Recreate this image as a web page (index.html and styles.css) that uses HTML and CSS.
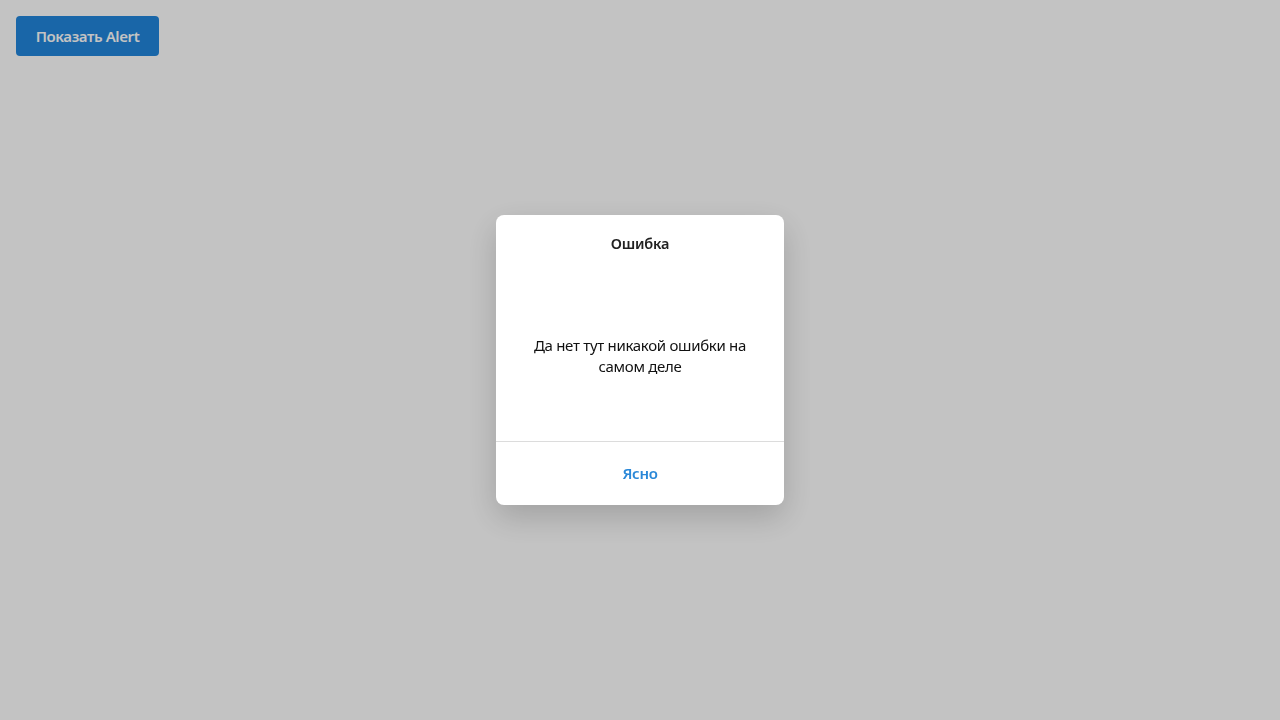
FILE: index.html
```html
<!DOCTYPE html>
<html lang="ru">
<head>
<meta charset="utf-8">
<link rel="stylesheet" href="styles.css">
</head>
<body>
<div class="page">
  <button class="show-btn">Показать Alert</button>
</div>
<div class="overlay">
  <div class="alert">
    <div class="alert-title">Ошибка</div>
    <div class="alert-body">
      <p class="alert-message">Да нет тут никакой ошибки на самом деле</p>
    </div>
    <div class="alert-footer">
      <button class="alert-btn">Ясно</button>
    </div>
  </div>
</div>
</body>
</html>
```
FILE: styles.css
```css
html, body {
  margin: 0;
  padding: 0;
  height: 100%;
}
body {
  font-family: "Noto Sans", "Open Sans", sans-serif;
  background: #ffffff;
}
.page {
  padding: 16px;
}
.show-btn {
  font-family: inherit;
  font-size: 15px;
  font-weight: 600;
  color: #ffffff;
  background: #2186dc;
  border: none;
  border-radius: 4px;
  height: 40px;
  width: 143px;
  padding: 0;
  letter-spacing: -0.4px;
}
.overlay {
  position: fixed;
  inset: 0;
  background: rgba(0, 0, 0, 0.234);
  display: flex;
  align-items: center;
  justify-content: center;
}
.alert {
  width: 288px;
  height: 290px;
  background: #ffffff;
  border-radius: 8px;
  box-shadow: 0 12px 32px rgba(0, 0, 0, 0.18);
  display: flex;
  flex-direction: column;
}
.alert-title {
  text-align: center;
  font-size: 14.5px;
  font-weight: 600;
  color: #222222;
  padding-top: 18px;
  line-height: 20px;
  letter-spacing: -0.2px;
}
.alert-body {
  flex: 1;
  display: flex;
  align-items: center;
  justify-content: center;
  padding: 0 28px;
  border-bottom: 1px solid #dcdcdc;
}
.alert-message {
  margin: 18px 0 0 0;
  text-align: center;
  font-size: 15px;
  line-height: 21px;
  color: #111111;
  letter-spacing: -0.3px;
}
.alert-footer {
  height: 63px;
  display: flex;
  align-items: center;
  justify-content: center;
  padding-bottom: 2px;
  box-sizing: border-box;
}
.alert-btn {
  font-family: inherit;
  font-size: 15px;
  font-weight: 600;
  color: #2a88d8;
  background: none;
  border: none;
  padding: 0;
  letter-spacing: -0.3px;
}
```
